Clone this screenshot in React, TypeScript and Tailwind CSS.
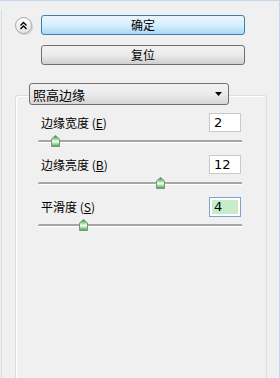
import React from 'react';

const font = { fontFamily: '"Noto Sans CJK SC", "Noto Sans", sans-serif' };

const CollapseButton = () => (
  <div className="w-[17px] h-[17px] rounded-full border border-[#a8a8a8] bg-gradient-to-b from-white to-[#e2e2e2] flex items-center justify-center shadow-[1px_1px_1px_rgba(0,0,0,0.15)]">
    <svg width="9" height="9" viewBox="0 0 9 9" fill="none" stroke="#000" strokeWidth="1.4">
      <path d="M1.5 4.5 L4.5 1.5 L7.5 4.5" />
      <path d="M1.5 8 L4.5 5 L7.5 8" />
    </svg>
  </div>
);

const Thumb = ({ left }: { left: number }) => (
  <svg
    className="absolute top-0"
    style={{ left }}
    width="9"
    height="12"
    viewBox="0 0 9 12"
  >
    <defs>
      <linearGradient id="thumbg" x1="0" y1="0" x2="0" y2="1">
        <stop offset="0" stopColor="#1e8f2a" />
        <stop offset="0.35" stopColor="#9ee0a4" />
        <stop offset="0.55" stopColor="#f4fff4" />
        <stop offset="0.8" stopColor="#7fd488" />
        <stop offset="1" stopColor="#2aa53a" />
      </linearGradient>
    </defs>
    <polygon points="4.5,0.5 8.5,4 8.5,11.5 0.5,11.5 0.5,4" fill="url(#thumbg)" stroke="#8a8a8a" strokeWidth="1" />
  </svg>
);

const Slider = ({ thumb }: { thumb: number }) => (
  <div className="relative mt-[3px] h-[12px] ml-[22px] mr-[24px]">
    <div className="absolute left-0 right-0 top-[5px] h-[3px] border-t-2 border-[#a6a6a6] bg-white rounded-l-full" />
    <Thumb left={thumb} />
  </div>
);

const Field = ({ label, k, value, focused }: { label: string; k: string; value: string; focused?: boolean }) => (
  <div className="flex items-center justify-between h-[19px] pl-[25px] pr-[25px]">
    <span className="text-[12px] text-black leading-none">
      {label} (<span className="underline">{k}</span>)
    </span>
    {focused ? (
      <div className="w-[32px] h-[20px] border border-[#7da2ce] bg-white p-[2px]">
        <div className="h-full bg-[#c6ecc9] text-[13px] leading-[14px] pl-[2px] text-black" style={{ fontFamily: '"DejaVu Sans", sans-serif' }}>
          {value}
        </div>
      </div>
    ) : (
      <div className="w-[32px] h-[19px] border border-[#c9c9c9] bg-white pl-[4px] text-[13px] leading-[17px] text-black" style={{ fontFamily: '"DejaVu Sans", sans-serif' }}>
        {value}
      </div>
    )}
  </div>
);

export default function App() {
  return (
    <div className="w-[280px] h-[378px] overflow-hidden bg-[#f0f0f0] border-t border-r border-[#c3d6ea] pt-[9px] pl-[1px]" style={font}>
      <div className="h-full border-l border-[#d3dde6] pt-[5px]">
        <div className="flex items-center">
          <div className="ml-[13px] mt-[1px]">
            <CollapseButton />
          </div>
          <button className="ml-[9px] w-[204px] h-[20px] rounded-[3px] border border-[#3c7fb1] bg-gradient-to-b from-[#eaf6fd] via-[#d9f0fc] to-[#a7d9f5] text-[12px] text-black leading-none">
            确定
          </button>
        </div>
        <button className="mt-[10px] ml-[39px] w-[204px] h-[20px] rounded-[3px] border border-[#707070] bg-gradient-to-b from-[#f2f2f2] via-[#ebebeb] to-[#cfcfcf] text-[12px] text-black leading-none">
          复位
        </button>
        <div className="relative z-10 mt-[18px] ml-[27px] w-[200px] h-[22px] rounded-[3px] border border-[#707070] bg-gradient-to-b from-[#f2f2f2] via-[#ebebeb] to-[#d6d6d6] flex items-center justify-between pl-[3px] pr-[6px]">
          <span className="text-[13px] text-black leading-none">照高边缘</span>
          <svg width="7" height="4" viewBox="0 0 7 4">
            <polygon points="0,0 7,0 3.5,4" fill="#000" />
          </svg>
        </div>
        <div className="mt-[-10px] ml-[13px] w-[252px] h-[300px] rounded-[3px] border border-[#d5dfe5] shadow-[inset_1px_1px_0_#ffffff] pt-[17px]">
          <Field label="边缘宽度" k="E" value="2" />
          <Slider thumb={13} />
          <div className="mt-[8px]">
            <Field label="边缘亮度" k="B" value="12" />
          </div>
          <Slider thumb={118} />
          <div className="mt-[8px]">
            <Field label="平滑度" k="S" value="4" focused />
          </div>
          <Slider thumb={41} />
        </div>
      </div>
    </div>
  );
}
